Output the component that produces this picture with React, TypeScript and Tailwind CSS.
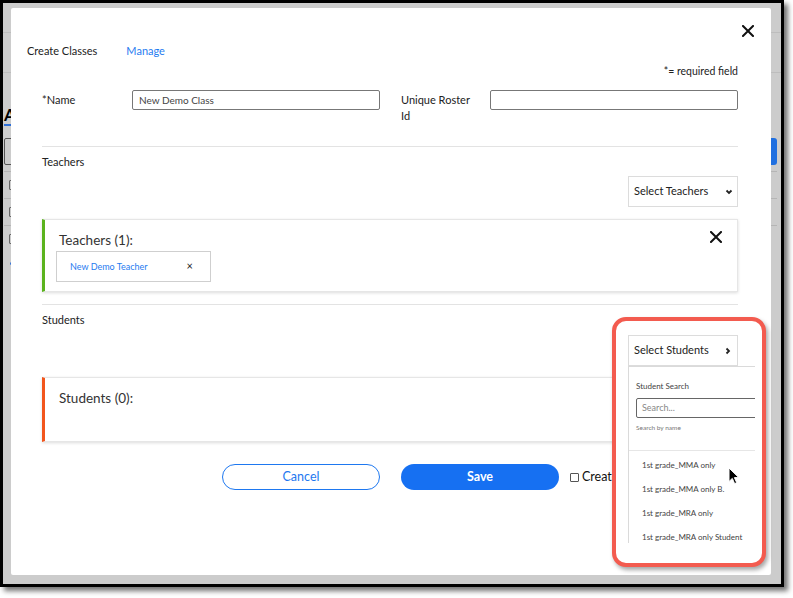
import React from 'react';

const students = ['1st grade_MMA only', '1st grade_MMA only B.', '1st grade_MRA only', '1st grade_MRA only Student'];

const CloseIcon: React.FC<{ size?: number; stroke?: number }> = ({ size = 12, stroke = 2 }) => (
  <svg width={size} height={size} viewBox="0 0 12 12" className="block">
    <path d="M1 1 L11 11 M11 1 L1 11" stroke="#111" strokeWidth={stroke} strokeLinecap="square" fill="none" />
  </svg>
);

const ChevronDown = () => (
  <svg width="8" height="6" viewBox="0 0 8 6" className="block">
    <path d="M1.5 1.5 L4 4 L6.5 1.5" stroke="#222" strokeWidth="1.8" fill="none" />
  </svg>
);

const ChevronRight = () => (
  <svg width="6" height="8" viewBox="0 0 6 8" className="block">
    <path d="M1.5 1.5 L4 4 L1.5 6.5" stroke="#222" strokeWidth="1.8" fill="none" />
  </svg>
);

const Cursor = () => (
  <svg width="12" height="18" viewBox="0 0 12 18" className="block">
    <path d="M1 1 L1 14.5 L4.3 11.4 L6.6 16.6 L8.7 15.7 L6.4 10.6 L10.8 10.6 Z" fill="#000" stroke="#fff" strokeWidth="1" />
  </svg>
);

// the page behind the dimmed overlay; only a sliver shows either side of the modal
const BackgroundPage = () => (
  <div className="text-black">
    <div className="h-[30px] border-b border-[#bdbdbd]" />
    <div className="h-[40px] border-b border-[#bdbdbd]" />
    <div className="pl-[1px] pr-[4px] pt-[30px]">
      <span className="inline-block text-[17px] font-bold leading-[18px] border-b-2 border-[#2f6fd6]">A</span>
      <div className="mt-[11px] flex justify-between">
        <div className="w-[220px] h-[27px] border border-[#555] rounded-[2px]" />
        <div className="w-[90px] h-[27px] bg-[#1f6fe0] rounded-[3px]" />
      </div>
      <div className="mt-[6px]">
        {[0, 1, 2].map((i) => (
          <div key={i} className="h-[27px] border-t border-[#b5b5b5] flex items-center pl-[5px]">
            <div className="w-[6px] h-[10px] border border-[#666] rounded-[1px]" />
          </div>
        ))}
        <div className="pl-[6px] pt-[10px]">
          <div className="w-[3px] h-[3px] rounded-full bg-[#2f6fd6]" />
        </div>
      </div>
    </div>
  </div>
);

const App: React.FC = () => {
  return (
    <div className="w-[793px] h-[598px] bg-white relative overflow-hidden font-['Lato',sans-serif]">
      <div className="w-[784px] h-[587px] border-[3px] border-black bg-[#cccccc] shadow-[4px_4px_5px_rgba(0,0,0,0.55)] relative overflow-hidden">
        <BackgroundPage />

        {/* Modal */}
        <div className="absolute left-[8px] top-[5px] w-[760px] h-[567px] bg-white rounded-[2px] text-[#222]">
          {/* Close */}
          <div className="h-[30px] flex justify-end pt-[15px] pr-[17px]">
            <button>
              <CloseIcon />
            </button>
          </div>

          {/* Tabs */}
          <div className="h-[26px] flex items-center pl-[16px] text-[11px]">
            <span className="text-[#222]">Create Classes</span>
            <span className="ml-[29px] text-[#1f7bf0]">Manage</span>
          </div>

          <div className="pl-[31px] pr-[33px]">
            <div className="h-[16px] flex items-center justify-end text-[10.5px] text-[#222]">*= required field</div>

            {/* Name row */}
            <div className="mt-[10px] flex text-[11px] leading-[16px]">
              <div className="w-[90px] pt-[2px]">*Name</div>
              <div className="w-[248px] h-[20px] border border-[#777] rounded-[2px] flex items-center pl-[6px] text-[10px] text-[#444]">
                New Demo Class
              </div>
              <div className="w-[89px] ml-[21px] pt-[2px] pr-[10px]">Unique Roster Id</div>
              <div className="w-[248px] h-[20px] border border-[#777] rounded-[2px]" />
            </div>

            {/* Teachers */}
            <div className="mt-[22px] border-t border-[#e3e3e3] pt-[7px]">
              <div className="h-[16px] flex items-center text-[11px]">Teachers</div>
              <div className="mt-[6px] flex justify-end">
                <button className="w-[110px] h-[31px] border border-[#dcdcdc] flex items-center justify-between pl-[5px] pr-[4px] text-[11px] text-[#222]">
                  <span>Select Teachers</span>
                  <ChevronDown />
                </button>
              </div>
              <div className="mt-[12px] h-[73px] border border-[#e6e6e6] border-l-[3px] border-l-[#5bb31d] shadow-[0_1px_3px_rgba(0,0,0,0.14)] pl-[11px] pr-[15px] pt-[11px]">
                <div className="h-[18px] flex justify-between items-start">
                  <span className="ml-[3px] text-[13.5px] leading-[18px] text-[#333]">Teachers (1):</span>
                  <CloseIcon size={12} />
                </div>
                <div className="mt-[2px] w-[155px] h-[31px] border border-[#cfcfcf] flex items-center justify-between pl-[13px] pr-[17px]">
                  <span className="text-[9px] text-[#1f7bf0]">New Demo Teacher</span>
                  <span className="text-[11px] text-[#222] leading-none -mt-[3px]">×</span>
                </div>
              </div>
            </div>

            {/* Students */}
            <div className="mt-[12px] border-t border-[#e3e3e3] pt-[7px]">
              <div className="h-[16px] flex items-center text-[11px]">Students</div>
              <div className="mt-[7px] flex justify-end">
                <div className="relative z-20">
                  <button className="w-[110px] h-[31px] bg-white border border-[#dcdcdc] flex items-center justify-between pl-[5px] pr-[6px] text-[11px] text-[#222]">
                    <span>Select Students</span>
                    <ChevronRight />
                  </button>
                  {/* Dropdown menu */}
                  <div className="absolute left-0 top-[31px] w-[127px] h-[177px] overflow-hidden bg-white border-l border-t border-[#dadada]">
                    <div className="pl-[7px] pt-[14px]">
                      <div className="text-[8px] leading-[10px] text-[#444]">Student Search</div>
                      <div className="mt-[7px] w-[150px] h-[20px] border border-[#666] rounded-[2px] flex items-center pl-[5px] text-[9px] text-[#888]">
                        Search...
                      </div>
                      <div className="mt-[6px] text-[6.5px] leading-[8px] text-[#777]">Search by name</div>
                    </div>
                    <div className="mt-[18px] border-t border-[#e6e6e6] pt-[2px]">
                      {students.map((s) => (
                        <div key={s} className="h-[24px] flex items-center pl-[13px] text-[8px] text-[#444] whitespace-nowrap">
                          {s}
                        </div>
                      ))}
                    </div>
                  </div>
                </div>
              </div>
              <div className="mt-[11px] h-[65px] border border-[#e6e6e6] border-l-[3px] border-l-[#f2551c] shadow-[0_1px_3px_rgba(0,0,0,0.14)] pl-[11px] pt-[11px]">
                <div className="ml-[3px] text-[13.5px] leading-[18px] text-[#333]">Students (0):</div>
              </div>
            </div>

            {/* Actions */}
            <div className="mt-[22px] flex items-center pl-[180px]">
              <button className="w-[158px] h-[26px] rounded-full border border-[#1e78f0] text-[12.5px] text-[#1e78f0]">Cancel</button>
              <button className="ml-[21px] w-[158px] h-[26px] rounded-full bg-[#1670f2] text-[12.5px] font-bold text-white">Save</button>
              <label className="ml-[11px] flex items-center text-[12.5px] text-[#111]">
                <span className="w-[9px] h-[9px] border border-[#555] rounded-[1px] bg-white" />
                <span className="ml-[3px]">Create Another Class</span>
              </label>
            </div>
          </div>

          {/* Annotation highlight */}
          <div className="absolute left-[601px] top-[309px] w-[154px] h-[250px] z-10 bg-white border-[4px] border-[#f35b4f] rounded-[14px] shadow-[2px_3px_4px_rgba(0,0,0,0.35)]" />

          {/* Mouse pointer */}
          <div className="absolute left-[717px] top-[459px] z-30">
            <Cursor />
          </div>
        </div>
      </div>
    </div>
  );
};

export default App;
